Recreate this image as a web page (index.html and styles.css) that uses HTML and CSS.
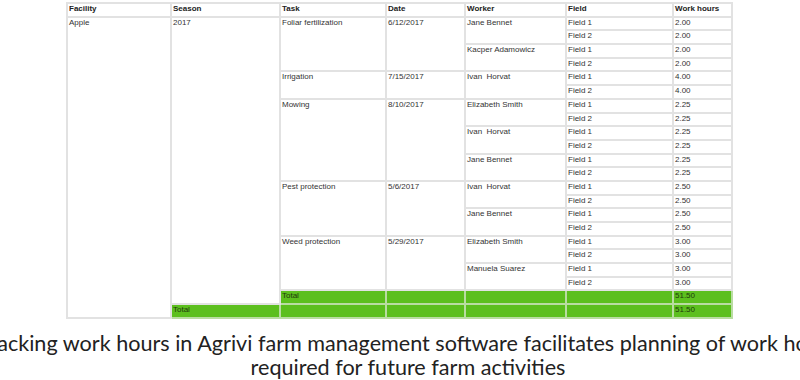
FILE: index.html
```html
<!DOCTYPE html>
<html>
<head>
<meta charset="utf-8">
<link rel="stylesheet" href="styles.css">
</head>
<body>
<div class="page">
<table class="report">
<colgroup>
<col class="c-fac"><col class="c-sea"><col class="c-task"><col class="c-date"><col class="c-work"><col class="c-field"><col class="c-hours">
</colgroup>
<thead>
<tr><th>Facility</th><th>Season</th><th>Task</th><th>Date</th><th>Worker</th><th>Field</th><th>Work hours</th></tr>
</thead>
<tbody>
<tr><td rowspan="22">Apple</td><td rowspan="21">2017</td><td rowspan="4">Foliar fertilization</td><td rowspan="4">6/12/2017</td><td rowspan="2">Jane Bennet</td><td>Field 1</td><td>2.00</td></tr>
<tr><td>Field 2</td><td>2.00</td></tr>
<tr><td rowspan="2">Kacper Adamowicz</td><td>Field 1</td><td>2.00</td></tr>
<tr><td>Field 2</td><td>2.00</td></tr>
<tr><td rowspan="2">Irrigation</td><td rowspan="2">7/15/2017</td><td rowspan="2">Ivan&nbsp; Horvat</td><td>Field 1</td><td>4.00</td></tr>
<tr><td>Field 2</td><td>4.00</td></tr>
<tr><td rowspan="6">Mowing</td><td rowspan="6">8/10/2017</td><td rowspan="2">Elizabeth Smith</td><td>Field 1</td><td>2.25</td></tr>
<tr><td>Field 2</td><td>2.25</td></tr>
<tr><td rowspan="2">Ivan&nbsp; Horvat</td><td>Field 1</td><td>2.25</td></tr>
<tr><td>Field 2</td><td>2.25</td></tr>
<tr><td rowspan="2">Jane Bennet</td><td>Field 1</td><td>2.25</td></tr>
<tr><td>Field 2</td><td>2.25</td></tr>
<tr><td rowspan="4">Pest protection</td><td rowspan="4">5/6/2017</td><td rowspan="2">Ivan&nbsp; Horvat</td><td>Field 1</td><td>2.50</td></tr>
<tr><td>Field 2</td><td>2.50</td></tr>
<tr><td rowspan="2">Jane Bennet</td><td>Field 1</td><td>2.50</td></tr>
<tr><td>Field 2</td><td>2.50</td></tr>
<tr><td rowspan="4">Weed protection</td><td rowspan="4">5/29/2017</td><td rowspan="2">Elizabeth Smith</td><td>Field 1</td><td>3.00</td></tr>
<tr><td>Field 2</td><td>3.00</td></tr>
<tr><td rowspan="2">Manuela Suarez</td><td>Field 1</td><td>3.00</td></tr>
<tr><td>Field 2</td><td>3.00</td></tr>
<tr class="total"><td>Total</td><td></td><td></td><td></td><td>51.50</td></tr>
<tr class="total"><td>Total</td><td></td><td></td><td></td><td></td><td>51.50</td></tr>
</tbody>
</table>
<div class="caption">
<span class="line">Tracking work hours in Agrivi farm management software facilitates planning of work hours</span>
<span class="line">required for future farm activities</span>
</div>
</div>
</body>
</html>
```
FILE: styles.css
```css
html, body {
  margin: 0;
  padding: 0;
  background: #ffffff;
  overflow: hidden;
}
.page {
  width: 800px;
  height: 380px;
  overflow: hidden;
  position: relative;
}
.report {
  margin: 2px 0 0 66px;
  width: 665px;
  table-layout: fixed;
  border-collapse: collapse;
  font-family: "Liberation Sans", Arial, sans-serif;
  font-size: 8px;
  color: #333;
}
.c-fac { width: 104px; }
.c-sea { width: 109px; }
.c-task { width: 106px; }
.c-date { width: 79px; }
.c-work { width: 101px; }
.c-field { width: 107px; }
.c-hours { width: 59px; }
.report th,
.report td {
  border: 2px solid #e2e2e2;
  padding: 0 2px 0 1px;
  height: 11.7px;
  line-height: 10px;
  vertical-align: top;
  text-align: left;
  white-space: nowrap;
  overflow: hidden;
}
.report th {
  font-weight: bold;
  color: #222;
}
.report .total td {
  background: #5cbf1e;
  color: #1f3a0c;
  border-color: #b9dca2;
}
.caption {
  width: 1000px;
  margin: 12px 0 0 -92px;
  font-family: "Lato", "Open Sans", sans-serif;
  font-size: 21.6px;
  line-height: 24px;
  color: #222;
  text-align: center;
}
.caption .line {
  display: block;
  white-space: nowrap;
}
```
